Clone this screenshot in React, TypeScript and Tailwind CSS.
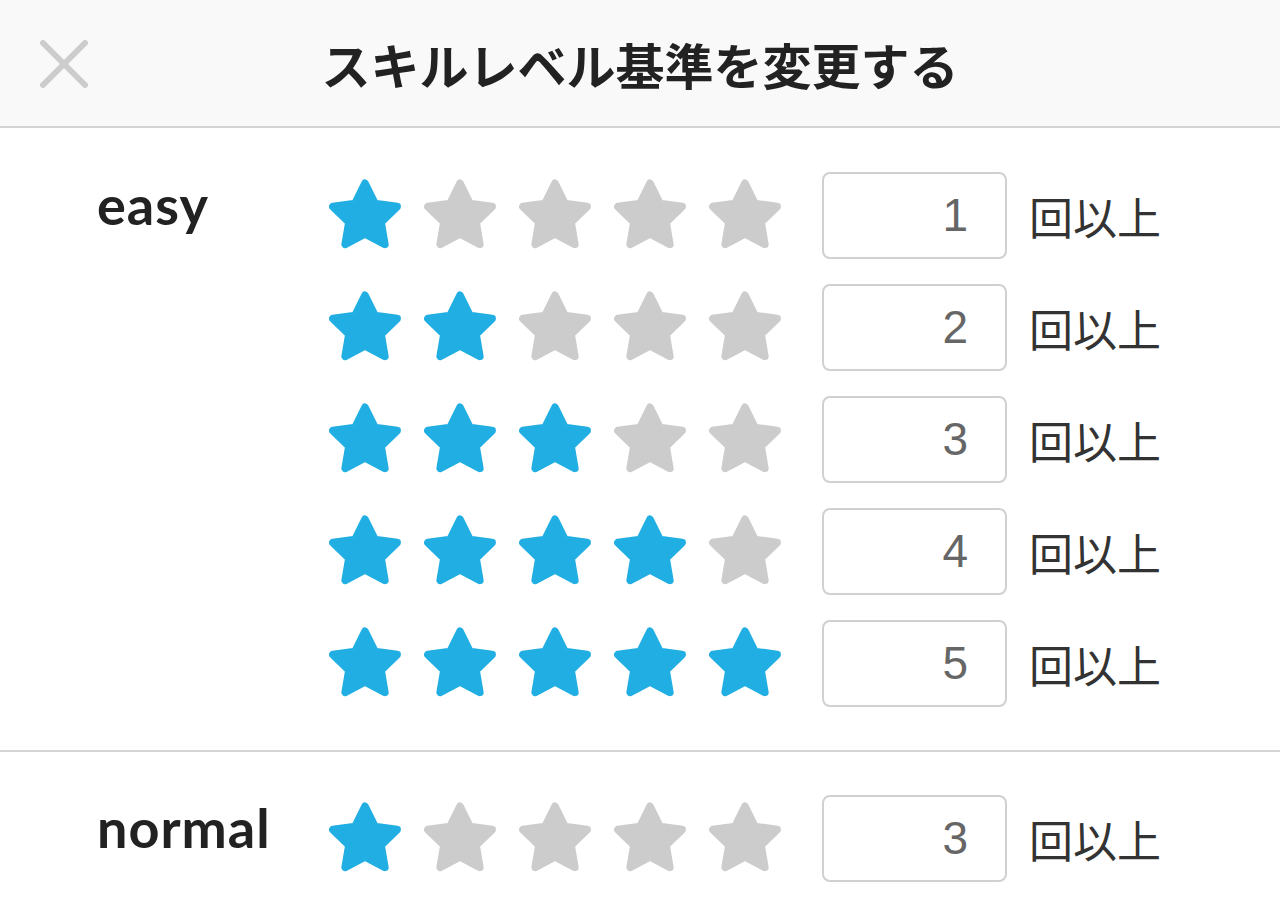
import React from "react";

const BLUE = "#20aee3";
const GRAY = "#cccccc";

function Star({ on }: { on: boolean }) {
  const c = on ? BLUE : GRAY;
  return (
    <svg width="72" height="70" viewBox="3 4 94 90" className="block">
      <polygon
        points="50,9 62.93,35.2 91.85,39.4 70.92,59.8 75.86,88.6 50,75 24.14,88.6 29.08,59.8 8.15,39.4 37.07,35.2"
        fill={c}
        stroke={c}
        strokeWidth="10"
        strokeLinejoin="round"
      />
    </svg>
  );
}

function Row({ stars, value }: { stars: number; value: number }) {
  return (
    <div className="flex items-center h-[87px]">
      <div className="flex items-center gap-[23px] -mt-[4px]">
        {[0, 1, 2, 3, 4].map((i) => (
          <Star key={i} on={i < stars} />
        ))}
      </div>
      <div className="ml-[41px] w-[185px] h-[87px] border-2 border-[#d0d0d0] rounded-[8px] flex items-center justify-end pr-[37px] text-[46px] text-[#666666] font-['Liberation_Sans',sans-serif]">
        {value}
      </div>
      <div className="ml-[22px] text-[44px] text-[#333333] font-['Noto_Sans_CJK_JP',sans-serif] leading-none">
        回以上
      </div>
    </div>
  );
}

export default function App() {
  return (
    <div className="w-[1280px] h-[904px] bg-white overflow-hidden">
      <div className="relative h-[128px] bg-[#f9f9f9] border-b-2 border-[#d4d4d4] flex items-center justify-center">
        <svg
          className="absolute left-[40px] top-[40px]"
          width="48"
          height="48"
          viewBox="0 0 48 48"
        >
          <path
            d="M3 3 L45 45 M45 3 L3 45"
            stroke="#cccccc"
            strokeWidth="6"
            strokeLinecap="round"
          />
        </svg>
        <div className="text-[49px] font-bold text-[#222222] font-['Noto_Sans_CJK_JP',sans-serif] leading-none">
          スキルレベル基準を変更する
        </div>
      </div>

      <div className="flex pl-[97px] pt-[44px] pb-[43px] border-b-2 border-[#d4d4d4]">
        <div className="w-[232px] h-[87px] flex items-center -mt-[11px] text-[54px] tracking-[1px] font-bold text-[#222222] font-['Lato',sans-serif]">
          easy
        </div>
        <div className="flex flex-col gap-[25px]">
          <Row stars={1} value={1} />
          <Row stars={2} value={2} />
          <Row stars={3} value={3} />
          <Row stars={4} value={4} />
          <Row stars={5} value={5} />
        </div>
      </div>

      <div className="flex pl-[97px] pt-[43px]">
        <div className="w-[232px] h-[87px] flex items-center -mt-[11px] text-[54px] tracking-[1px] font-bold text-[#222222] font-['Lato',sans-serif]">
          normal
        </div>
        <div className="flex flex-col">
          <Row stars={1} value={3} />
        </div>
      </div>
    </div>
  );
}
